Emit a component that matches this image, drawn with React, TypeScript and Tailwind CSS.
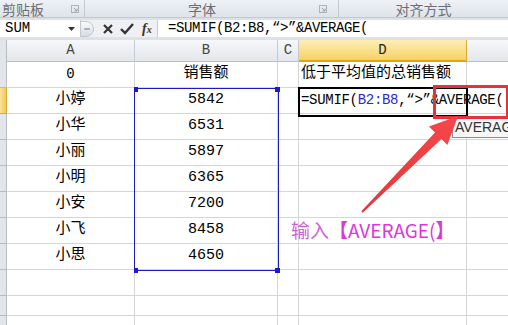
const mono = "font-['Liberation_Mono','Noto_Sans_CJK_SC',monospace]";

const rows: [string, string][] = [
  ["0", "销售额"],
  ["小婷", "5842"],
  ["小华", "6531"],
  ["小丽", "5897"],
  ["小明", "6365"],
  ["小安", "7200"],
  ["小飞", "8458"],
  ["小思", "4650"],
  ["", ""],
  ["", ""],
  ["", ""],
];
const heights = ["h-[26px]", "h-[26px]", "h-[26px]", "h-[26px]", "h-[26px]", "h-[26px]", "h-[26px]", "h-[26px]", "h-[26px]", "h-[20px]", "h-[20px]"];

function Launcher() {
  return (
    <svg width="8" height="8" viewBox="0 0 8 8" className="opacity-60">
      <rect x="0.5" y="0.5" width="7" height="7" fill="none" stroke="#8a9099" />
      <path d="M3 3 L6 6 M6 3.5 V6 H3.5" stroke="#6d737b" fill="none" />
    </svg>
  );
}

function HeaderCell({ label, w, active }: { label: string; w: string; active?: boolean }) {
  return (
    <div
      className={`${w} shrink-0 h-full flex items-center justify-center border-r text-[14px] ${mono} ${
        active
          ? "bg-gradient-to-b from-[#fdeeb6] to-[#f7d05e] border-[#d9a93a] border-b-2 border-b-[#e3a21a] text-[#222]"
          : "bg-gradient-to-b from-[#f7f8fa] to-[#e3e6eb] border-[#c6cbd2] border-b border-b-[#b9c0c9] text-[#444]"
      }`}
    >
      {label}
    </div>
  );
}

export default function App() {
  return (
    <div className="relative w-[508px] h-[325px] overflow-hidden bg-white">
      {/* ribbon group labels */}
      <div className="h-[18px] flex bg-gradient-to-b from-[#eef1f5] to-[#dfe4ea] border-b border-[#c3c9d1] text-[14px] leading-none text-[#6a6e75] font-['Noto_Sans_CJK_SC',sans-serif]">
        <div className="w-[85px] flex items-center justify-between pl-[2px] pr-[5px] border-r border-[#c3c9d1]">
          <span>剪贴板</span>
          <Launcher />
        </div>
        <div className="w-[254px] flex items-center border-r border-[#c3c9d1]">
          <span className="w-[234px] text-center">字体</span>
          <Launcher />
        </div>
        <div className="flex-1 flex items-center justify-center">对齐方式</div>
      </div>

      {/* formula bar */}
      <div className="h-[22px] flex bg-[#dde2e8] pt-[2px] pb-[3px]">
        <div className="w-[80px] bg-white flex items-center justify-between pl-[5px] pr-[5px]">
          <span className={`${mono} text-[14px] text-black`}>SUM</span>
          <svg width="7" height="4" viewBox="0 0 7 4">
            <path d="M0 0 H7 L3.5 4 Z" fill="#333" />
          </svg>
        </div>
        <div className="w-[77px] flex items-center bg-[#eef0f3] border-l border-[#c6ccd3]">
          <div className="w-[14px] h-[16px] rounded-r-full bg-gradient-to-b from-[#fafbfc] to-[#d6dbe1] border border-[#c3c8cf] flex items-center justify-center -ml-[1px]">
            <div className="w-[6px] h-[2px] bg-[#a9afb7] rounded" />
          </div>
          <svg width="12" height="12" viewBox="0 0 12 12" className="ml-[8px]">
            <path d="M2 2 L10 10 M10 2 L2 10" stroke="#333" strokeWidth="2.2" />
          </svg>
          <svg width="14" height="12" viewBox="0 0 14 12" className="ml-[6px]">
            <path d="M1 6 L5 10 L13 1" stroke="#333" strokeWidth="2.4" fill="none" />
          </svg>
          <span className="ml-[8px] font-['Liberation_Serif',serif] italic text-[14px] text-[#333] font-bold leading-none">
            f<span className="text-[10px]">x</span>
          </span>
        </div>
        <div className="flex-1 bg-white border-l border-[#c6ccd3] flex items-center pl-[10px]">
          <span className={`${mono} text-[14px] tracking-[-0.4px] whitespace-nowrap text-black`}>
            =SUMIF(B2:B8,“&gt;”&amp;AVERAGE(
          </span>
        </div>
      </div>

      {/* column headers */}
      <div className="h-[22px] flex">
        <div className="w-[7px] shrink-0 h-full bg-[#e2e5ea] border-r border-[#b5bcc5]" />
        <HeaderCell label="A" w="w-[128px]" />
        <HeaderCell label="B" w="w-[143px]" />
        <HeaderCell label="C" w="w-[21px]" />
        <HeaderCell label="D" w="w-[168px]" active />
        <div className="flex-1 h-full bg-gradient-to-b from-[#f7f8fa] to-[#e3e6eb] border-b border-[#b9c0c9]" />
      </div>

      {/* sheet rows */}
      {rows.map(([a, b], i) => (
        <div key={i} className={`${heights[i]} flex text-black`}>
          <div
            className={`w-[7px] shrink-0 border-r border-b ${
              i === 1 ? "bg-gradient-to-r from-[#fbe39a] to-[#f5c84c] border-[#d9a93a]" : "bg-[#e2e5ea] border-[#b5bcc5]"
            }`}
          />
          <div className={`w-[128px] shrink-0 border-r border-b border-[#d6d6d6] flex items-center justify-center ${mono} ${i === 0 ? "text-[14px]" : "text-[15px]"}`}>
            {a}
          </div>
          <div className={`w-[143px] shrink-0 border-r border-b border-[#d6d6d6] flex items-center justify-center ${mono} text-[15px]`}>
            {b}
          </div>
          <div className="w-[21px] shrink-0 border-r border-b border-[#d6d6d6]" />
          <div className={`w-[168px] shrink-0 border-r border-b border-[#d6d6d6] flex items-center pl-[2px] ${mono} text-[15px] overflow-visible relative z-10`}>
            {i === 0 && <span className="whitespace-nowrap">低于平均值的总销售额</span>}
            {i === 1 && (
              <span className={`${mono} text-[14px] tracking-[-0.3px] whitespace-nowrap`}>
                =SUMIF(<span className="text-[#2a2ad0]">B2:B8</span>,“&gt;”&amp;AVERAGE(
              </span>
            )}
          </div>
          <div className="flex-1 border-b border-[#d6d6d6]" />
        </div>
      ))}

      {/* selection B2:B8 */}
      <div className="absolute left-[134px] top-[88px] w-[145px] h-[183px] border border-[#1a1ac0] pointer-events-none">
        <div className="absolute -left-[1px] -top-[2px] w-[4px] h-[5px] bg-[#1a1ad0]" />
        <div className="absolute -right-[2px] -top-[2px] w-[5px] h-[5px] bg-[#1a1ad0]" />
        <div className="absolute -left-[1px] -bottom-[3px] w-[4px] h-[5px] bg-[#1a1ad0]" />
        <div className="absolute -right-[2px] -bottom-[3px] w-[5px] h-[5px] bg-[#1a1ad0]" />
      </div>

      {/* active cell D2 */}
      <div className="absolute left-[298px] top-[87px] w-[170px] h-[30px] border-[2px] border-black z-20 pointer-events-none" />

      {/* function tooltip */}
      <div className="absolute left-[452px] top-[117px] h-[21px] pl-[2px] pr-[4px] bg-[#f7f7f7] border border-[#8c8c8c] z-20 flex items-center whitespace-nowrap font-['Liberation_Sans',sans-serif] text-[14px] text-[#333]">
        AVERAGE(number1, [number2], ...)
      </div>

      {/* red highlight box */}
      <div className="absolute left-[433px] top-[85px] w-[76px] h-[34px] border-[3px] border-[#e8313b] z-30 pointer-events-none" />

      {/* arrow */}
      <svg className="absolute left-0 top-0 z-40 pointer-events-none" width="508" height="325" viewBox="0 0 508 325">
        <defs>
          <linearGradient id="arrowFill" x1="362" y1="212" x2="458" y2="116" gradientUnits="userSpaceOnUse">
            <stop offset="0" stopColor="#e6363a" />
            <stop offset="1" stopColor="#f5484a" />
          </linearGradient>
        </defs>
        <polygon
          points="361.3,211.3 435,132.5 429,126.6 458,116 447.4,145 441.5,139 362.7,212.7"
          fill="url(#arrowFill)"
        />
      </svg>

      {/* annotation */}
      <div className="absolute left-[291px] top-[216px] z-30 flex items-center whitespace-nowrap font-['Noto_Sans_CJK_SC',sans-serif] text-[19px] text-[#dc36dc]">
        <span className="text-[#cf63d6]">输入</span>
        <span className="font-bold">【</span>
        <span>AVERAGE(</span>
        <span className="font-bold">】</span>
      </div>
    </div>
  );
}
